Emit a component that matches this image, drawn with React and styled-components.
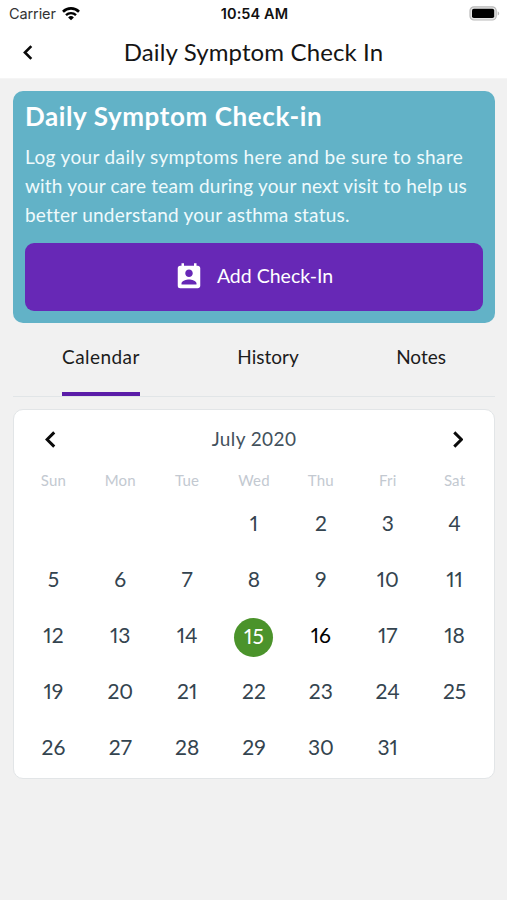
import React from 'react'
import styled, { createGlobalStyle } from 'styled-components'
import { MdPermContactCalendar } from 'react-icons/md'

const GlobalStyle = createGlobalStyle`
  * {
    box-sizing: border-box;
  }

  body {
    margin: 0;
    background-color: #f1f1f1;
    font-family: Lato, "Liberation Sans", sans-serif;
  }
`;

const Screen = styled.div`
  width: 507px;
  height: 900px;
  overflow: hidden;
  background-color: #f1f1f1;
`;

const StatusBar = styled.div`
  height: 27px;
  padding: 0 7px 0 9px;
  display: grid;
  grid-template-columns: 1fr auto 1fr;
  align-items: center;
  background-color: #fff;
  font-family: Inter, sans-serif;
  font-size: 14.5px;
`;

const Carrier = styled.div`
  display: flex;
  align-items: center;
  gap: 6px;
  color: #333;
  letter-spacing: -0.1px;
`;

const Time = styled.div`
  font-weight: 600;
  font-size: 14.5px;
  letter-spacing: 0.1px;
  color: #111;
`;

const Battery = styled.div`
  justify-self: end;
  display: flex;
`;

const Header = styled.header`
  height: 52px;
  padding: 0 23px;
  display: grid;
  grid-template-columns: 60px 1fr 60px;
  align-items: center;
  background-color: #fff;
  border-bottom: 1px solid #f5f5f5;
`;

const HeaderTitle = styled.h1`
  margin: 0;
  padding-bottom: 3px;
  text-align: center;
  font-size: 24px;
  font-weight: 400;
  letter-spacing: 0.12px;
  white-space: nowrap;
  color: #151515;
`;

const IconButton = styled.button`
  display: flex;
  width: fit-content;
  padding: 0;
  border: 0;
  background: none;
  color: #0a0a0a;
  cursor: pointer;
`;

const Content = styled.main`
  padding: 12px 12px 0 13px;
`;

const Banner = styled.section`
  height: 232px;
  padding: 9px 12px 12px;
  display: flex;
  flex-direction: column;
  border-radius: 10px;
  background-color: #62b2c7;
  color: #fff;
`;

const BannerTitle = styled.h2`
  margin: 0;
  line-height: 32px;
  font-size: 26px;
  font-weight: 700;
  letter-spacing: 0.6px;
`;

const BannerText = styled.p`
  margin: 10px 0 0;
  font-size: 19px;
  line-height: 29.2px;
  white-space: nowrap;
  color: #effafc;
`;

const Line = styled.span`
  display: block;
  letter-spacing: ${(props) => props.$spacing}px;
`;

const CheckInButton = styled.button`
  margin-top: auto;
  height: 68.5px;
  display: flex;
  align-items: center;
  justify-content: center;
  gap: 13px;
  padding: 0 1px 0 0;
  border: 0;
  border-radius: 9px;
  background-color: #6728b6;
  color: #fff;
  font-family: inherit;
  font-size: 19.5px;
  letter-spacing: 0px;
  cursor: pointer;
`;

const ButtonText = styled.span`
  padding-bottom: 2px;
`;

const Tabs = styled.nav`
  height: 74px;
  padding: 0 49px;
  display: flex;
  justify-content: space-between;
  border-bottom: 1px solid #e1e5e7;
`;

const Tab = styled.button`
  height: 73px;
  padding: 0 0 2px;
  border: 0;
  border-bottom: 4px solid ${(props) => (props.$active ? '#5a1ca8' : 'transparent')};
  background: none;
  color: #1c1c1c;
  font-family: inherit;
  font-size: 19px;
  letter-spacing: ${(props) => (props.$active ? '0.45px' : '0px')};
  cursor: pointer;
`;

const Calendar = styled.section`
  height: 370px;
  margin-top: 12px;
  padding: 0 6px;
  border: 1px solid #e2e5e7;
  border-radius: 10px;
  background-color: #fff;
`;

const MonthBar = styled.div`
  height: 59px;
  padding: 0 25px;
  display: flex;
  align-items: center;
  justify-content: space-between;
`;

const Month = styled.span`
  padding-bottom: 2px;
  font-size: 19px;
  letter-spacing: 0.4px;
  color: #43515c;
`;

const Week = styled.div`
  display: grid;
  grid-template-columns: repeat(7, 1fr);
`;

const Weekday = styled.span`
  height: 25px;
  line-height: 22px;
  text-align: center;
  font-size: 15px;
  letter-spacing: 0.2px;
  color: #c3c9d1;
`;

const Day = styled.div`
  height: 56.2px;
  display: flex;
  align-items: center;
  justify-content: center;
  font-size: 21px;
  font-variant-numeric: proportional-nums;
  color: ${(props) => (props.$today ? '#000' : '#34444f')};
`;

const Selected = styled.span`
  width: 39px;
  height: 39px;
  margin-top: 7px;
  padding-bottom: 5px;
  display: flex;
  align-items: center;
  justify-content: center;
  border-radius: 50%;
  background-color: #4b932b;
  color: #fff;
`;

const WEEKDAYS = ['Sun', 'Mon', 'Tue', 'Wed', 'Thu', 'Fri', 'Sat'];
const FIRST_DAY = 3;
const DAYS = Array.from({ length: 35 }, (_, i) => {
  const day = i - FIRST_DAY + 1;
  return day > 0 && day <= 31 ? day : null;
});

const Chevron = ({ width, height, stroke, right }) => (
  <svg width={width} height={height} viewBox="0 0 10 16" fill="none">
    <path
      d={right ? 'M1.2 1.2 8 8l-6.8 6.8' : 'M8.8 1.2 2 8l6.8 6.8'}
      stroke="currentColor"
      strokeWidth={stroke}
    />
  </svg>
);

const WifiIcon = () => (
  <svg width="18" height="14" viewBox="0 0 18 14" fill="none" stroke="#000">
    <path d="M1 4.7a11.4 11.4 0 0 1 16 0" strokeWidth="2.6" />
    <path d="M4 8.1a7.2 7.2 0 0 1 10 0" strokeWidth="2.4" />
    <path d="M9 13.3 6.1 10.5a4.2 4.2 0 0 1 5.8 0z" fill="#000" stroke="none" />
  </svg>
);

const BatteryIcon = () => (
  <svg width="31" height="15" viewBox="0 0 31 15">
    <rect x="1" y="0.8" width="26.2" height="13.2" rx="4" fill="#e6e6e6" stroke="#b9b9b9" strokeWidth="1.2" />
    <rect x="3" y="2.8" width="22.2" height="9.2" rx="1.8" fill="#000" />
    <path d="M28.7 5.2c2 .8 2 3.6 0 4.4z" fill="#b9b9b9" />
  </svg>
);

const App = () => {
  return (
    <Screen>
      <GlobalStyle />
      <StatusBar>
        <Carrier>
          Carrier
          <WifiIcon />
        </Carrier>
        <Time>10:54 AM</Time>
        <Battery>
          <BatteryIcon />
        </Battery>
      </StatusBar>

      <Header>
        <IconButton aria-label="Back">
          <Chevron width={9.5} height={15} stroke={2.8} />
        </IconButton>
        <HeaderTitle>Daily Symptom Check In</HeaderTitle>
      </Header>

      <Content>
        <Banner>
          <BannerTitle>Daily Symptom Check-in</BannerTitle>
          <BannerText>
            <Line $spacing={0.36}>Log your daily symptoms here and be sure to share</Line>
            <Line $spacing={0.19}>with your care team during your next visit to help us</Line>
            <Line $spacing={0.23}>better understand your asthma status.</Line>
          </BannerText>
          <CheckInButton>
            <MdPermContactCalendar size={30} />
            <ButtonText>Add Check-In</ButtonText>
          </CheckInButton>
        </Banner>

        <Tabs>
          <Tab $active>Calendar</Tab>
          <Tab>History</Tab>
          <Tab>Notes</Tab>
        </Tabs>

        <Calendar>
          <MonthBar>
            <IconButton aria-label="Previous month">
              <Chevron width={10.5} height={17} stroke={2.8} />
            </IconButton>
            <Month>July 2020</Month>
            <IconButton aria-label="Next month">
              <Chevron width={10.5} height={17} stroke={2.8} right />
            </IconButton>
          </MonthBar>
          <Week>
            {WEEKDAYS.map((name) => (
              <Weekday key={name}>{name}</Weekday>
            ))}
          </Week>
          <Week>
            {DAYS.map((day, i) => (
              <Day key={i} $today={day === 16}>
                {day === 15 ? <Selected>{day}</Selected> : day}
              </Day>
            ))}
          </Week>
        </Calendar>
      </Content>
    </Screen>
  )
}

export default App
